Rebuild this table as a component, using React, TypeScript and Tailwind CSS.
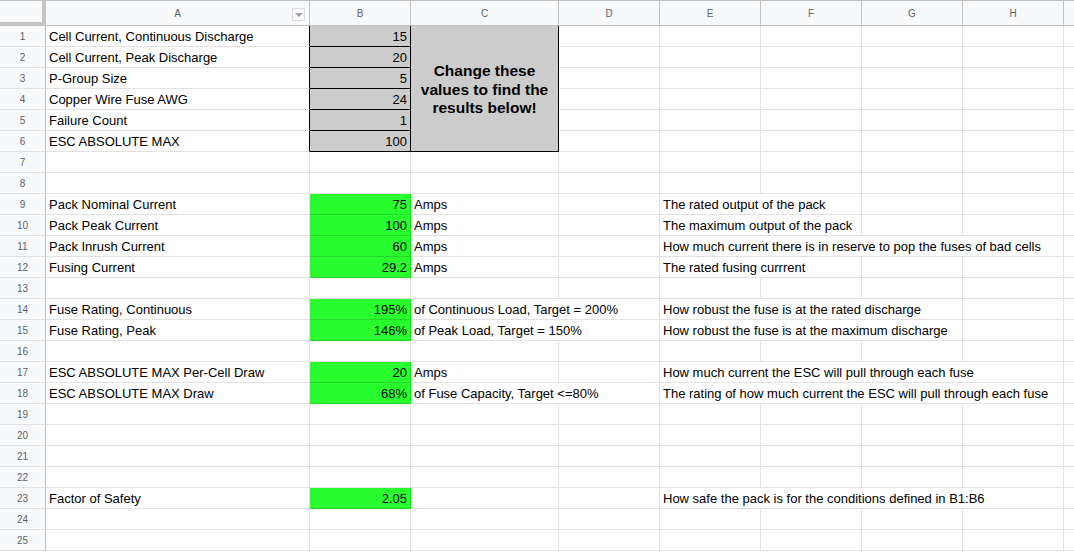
import React from 'react';

type Row = {
  a?: string;
  b?: string;
  bk?: 'gray' | 'green';
  c?: string;
  cs?: number;
  e?: string;
  es?: number;
};

const rows: Row[] = [
  { a: 'Cell Current, Continuous Discharge', b: '15', bk: 'gray' },
  { a: 'Cell Current, Peak Discharge', b: '20', bk: 'gray' },
  { a: 'P-Group Size', b: '5', bk: 'gray' },
  { a: 'Copper Wire Fuse AWG', b: '24', bk: 'gray' },
  { a: 'Failure Count', b: '1', bk: 'gray' },
  { a: 'ESC ABSOLUTE MAX', b: '100', bk: 'gray' },
  {},
  {},
  { a: 'Pack Nominal Current', b: '75', bk: 'green', c: 'Amps', e: 'The rated output of the pack', es: 2 },
  { a: 'Pack Peak Current', b: '100', bk: 'green', c: 'Amps', e: 'The maximum output of the pack', es: 2 },
  { a: 'Pack Inrush Current', b: '60', bk: 'green', c: 'Amps', e: 'How much current there is in reserve to pop the fuses of bad cells', es: 4 },
  { a: 'Fusing Current', b: '29.2', bk: 'green', c: 'Amps', e: 'The rated fusing currrent', es: 2 },
  {},
  { a: 'Fuse Rating, Continuous', b: '195%', bk: 'green', c: 'of Continuous Load, Target = 200%', cs: 2, e: 'How robust the fuse is at the rated discharge', es: 3 },
  { a: 'Fuse Rating, Peak', b: '146%', bk: 'green', c: 'of Peak Load, Target = 150%', cs: 2, e: 'How robust the fuse is at the maximum discharge', es: 3 },
  {},
  { a: 'ESC ABSOLUTE MAX Per-Cell Draw', b: '20', bk: 'green', c: 'Amps', e: 'How much current the ESC will pull through each fuse', es: 4 },
  { a: 'ESC ABSOLUTE MAX Draw', b: '68%', bk: 'green', c: 'of Fuse Capacity, Target <=80%', cs: 2, e: 'The rating of how much current the ESC will pull through each fuse', es: 4 },
  {},
  {},
  {},
  {},
  { a: 'Factor of Safety', b: '2.05', bk: 'green', e: 'How safe the pack is for the conditions defined in B1:B6', es: 4 },
  {},
  {},
];

const spanCls: Record<number, string> = {
  1: '',
  2: 'col-span-2',
  3: 'col-span-3',
  4: 'col-span-4',
};

const cell =
  'border-r border-b border-[#e2e2e2] overflow-hidden whitespace-nowrap leading-[20px] pt-[1px] px-[3px] text-black';

function HeaderCell({ label, children }: { label: string; children?: React.ReactNode }) {
  return (
    <div className="relative flex items-center justify-center border-t border-r border-b border-[#c0c0c0] bg-[#f8f9fa] text-[10px] text-[#5f6368]">
      {label}
      {children}
    </div>
  );
}

export default function App() {
  const cells: React.ReactNode[] = [];

  cells.push(
    <div key="corner" className="border-t border-[#c0c0c0] border-r-4 border-b-4 border-r-[#c4c4c4] border-b-[#c4c4c4] bg-[#f8f9fa]" />
  );
  cells.push(
    <HeaderCell key="hA" label="A">
      <div className="absolute right-[4px] top-[7px] flex h-[13px] w-[13px] items-center justify-center border border-[#dadce0] bg-[#fbfbfb]">
        <div className="h-0 w-0 border-l-[4px] border-r-[4px] border-t-[4px] border-l-transparent border-r-transparent border-t-[#9aa0a6]" />
      </div>
    </HeaderCell>
  );
  ['B', 'C', 'D', 'E', 'F', 'G', 'H'].forEach((l) => cells.push(<HeaderCell key={'h' + l} label={l} />));
  cells.push(<div key="hI" className="border-t border-b border-[#c0c0c0] bg-[#f8f9fa]" />);

  rows.forEach((r, i) => {
    const n = i + 1;
    const k = 'r' + n;
    cells.push(
      <div
        key={k + 'n'}
        className="flex items-center justify-center border-r border-b border-r-[#c0c0c0] border-b-[#e2e2e2] bg-[#f8f9fa] text-[10px] text-[#5f6368]"
      >
        {n}
      </div>
    );
    const isInput = i < 6;
    cells.push(
      <div key={k + 'a'} className={cell + (isInput ? ' border-r-black' : '')}>
        {r.a}
      </div>
    );
    if (r.bk === 'gray') {
      cells.push(
        <div key={k + 'b'} className={cell + ' border-r-black border-b-black bg-[#cccccc] text-right'}>
          {r.b}
        </div>
      );
    } else if (r.bk === 'green') {
      cells.push(
        <div key={k + 'b'} className={cell + ' border-r-[#27d62b] border-b-[#27d62b] bg-[#29fd2e] text-right'}>
          {r.b}
        </div>
      );
    } else {
      cells.push(<div key={k + 'b'} className={cell} />);
    }

    if (i === 0) {
      cells.push(
        <div
          key="merged"
          className="row-span-6 flex items-center justify-center border-r border-b border-black bg-[#cccccc] pt-[3px] text-center text-[15.5px] font-bold leading-[18.7px] text-black"
        >
          Change these
          <br />
          values to find the
          <br />
          results below!
        </div>
      );
      cells.push(<div key={k + 'd'} className={cell} />);
    } else if (isInput) {
      cells.push(<div key={k + 'd'} className={cell} />);
    } else {
      const cs = r.cs ?? 1;
      cells.push(
        <div key={k + 'c'} className={cell + ' ' + spanCls[cs]}>
          {r.c}
        </div>
      );
      if (cs === 1) cells.push(<div key={k + 'd'} className={cell} />);
    }

    const es = r.es ?? 1;
    cells.push(
      <div key={k + 'e'} className={cell + ' ' + spanCls[es]}>
        {r.e}
      </div>
    );
    for (let j = 0; j < 4 - es; j++) {
      cells.push(<div key={k + 'f' + j} className={cell} />);
    }
    cells.push(<div key={k + 'i'} className="border-b border-[#e2e2e2]" />);
  });

  return (
    <div className="h-[552px] w-[1074px] overflow-hidden bg-white font-['Liberation_Sans',Arial,sans-serif] text-[13px]">
      <div className="grid grid-cols-[46px_264px_101px_148px_101px_101px_101px_101px_101px_10px] grid-rows-[26px_repeat(25,21px)]">
        {cells}
      </div>
    </div>
  );
}
